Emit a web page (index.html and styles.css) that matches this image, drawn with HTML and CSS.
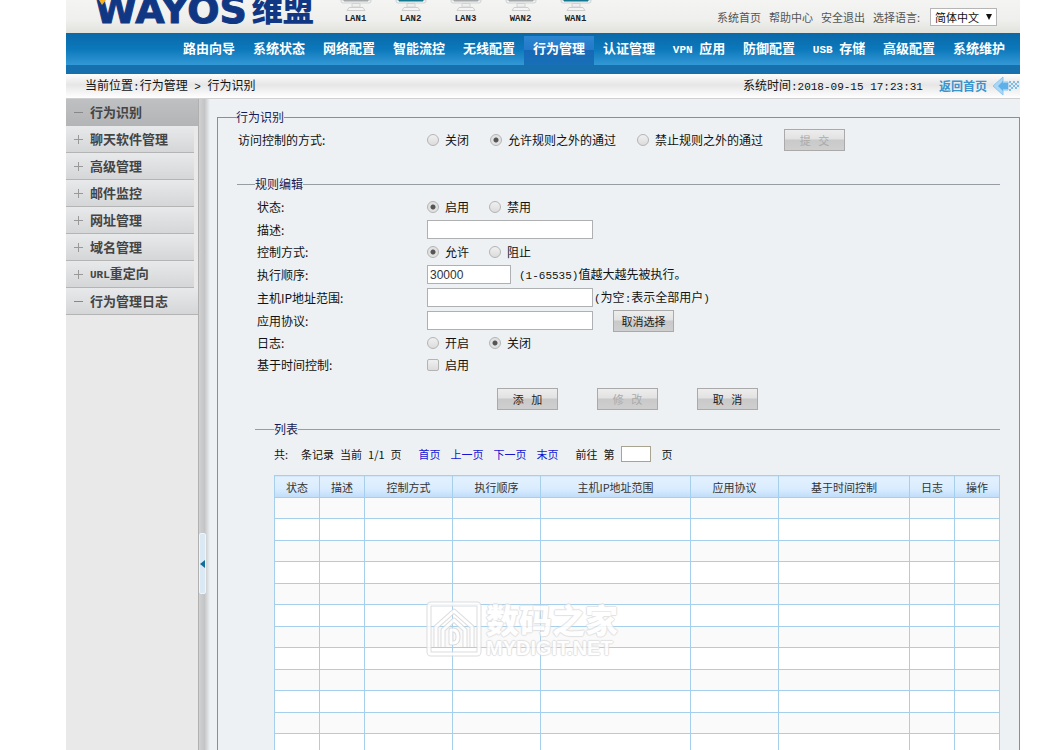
FILE: index.html
```html
<!DOCTYPE html>
<html lang="zh-CN">
<head>
<meta charset="utf-8">
<title>WAYOS 维盟 - 行为识别</title>
<link rel="stylesheet" href="styles.css">
</head>
<body>
<svg class="defs" aria-hidden="true">
  <symbol id="monitor" viewBox="0 0 34 12">
    <path d="M2 0V1Q2 3 4 3H30Q32 3 32 1V0Z" fill="#f1f3f3" stroke="#cfd4d5"/>
    <path class="screen" d="M5 0H29V1H5Z"/>
    <path d="M13 3.5H21V7H13Z" fill="#efefef" stroke="#d2d2d2"/>
    <path d="M10 7.5H24L26 10.5H8Z" fill="#f4f4f4" stroke="#cecece"/>
  </symbol>
</svg>
<div class="app">
  <header class="top">
    <div class="logo"><span class="logo-latin">WAYOS</span><span class="logo-cn">维盟</span>
      <svg class="logo-spark" viewBox="0 0 10 6" aria-hidden="true"><path d="M1 0H8L4 5Z" fill="#f6b21c"/></svg>
    </div>
    <div class="ports">
      <div class="port"><svg><use href="#monitor"/></svg>LAN1</div>
      <div class="port on"><svg><use href="#monitor"/></svg>LAN2</div>
      <div class="port"><svg><use href="#monitor"/></svg>LAN3</div>
      <div class="port"><svg><use href="#monitor"/></svg>WAN2</div>
      <div class="port on"><svg><use href="#monitor"/></svg>WAN1</div>
    </div>
    <div class="tools">
      <a href="#">系统首页</a><a href="#">帮助中心</a><a href="#">安全退出</a>
      <label for="lang">选择语言:</label>
      <span class="select"><select id="lang"><option>简体中文</option></select></span>
    </div>
  </header>
  <nav class="nav">
    <a href="#">路由向导</a><a href="#">系统状态</a><a href="#">网络配置</a><a href="#">智能流控</a><a href="#">无线配置</a><a href="#" class="active">行为管理</a><a href="#">认证管理</a><a href="#"><span class="mono">VPN </span>应用</a><a href="#">防御配置</a><a href="#"><span class="mono">USB </span>存储</a><a href="#">高级配置</a><a href="#">系统维护</a>
  </nav>
  <div class="crumbs">
    <div>当前位置<span class="mono">:</span>行为管理<span class="mono"> &gt; </span>行为识别</div>
    <div class="clock">系统时间<span class="mono">:2018-09-15 17:23:31</span></div>
    <a class="back" href="#">返回首页
      <svg viewBox="0 0 28 20" aria-hidden="true">
        <path d="M1 10L11 1V6H16V14H11V19Z" fill="#a9d7f5" stroke="#8cc6ee"/>
        <path d="M6 10L11 5V7H16V13H11V15Z" fill="#5eb0e8"/>
        <path d="M17 5H19V7H17ZM21 5H23V7H21ZM25 5H27V7H25ZM19 7H21V9H19ZM23 7H25V9H23ZM17 9H19V11H17ZM21 9H23V11H21ZM25 9H27V11H25ZM19 11H21V13H19ZM23 11H25V13H23ZM17 13H19V15H17Z" fill="#7dbde9"/>
      </svg>
    </a>
  </div>
  <div class="main">
    <aside class="side">
      <a href="#" class="wide current"><i class="sign minus"></i>行为识别</a>
      <a href="#"><i class="sign"></i>聊天软件管理</a>
      <a href="#"><i class="sign"></i>高级管理</a>
      <a href="#"><i class="sign"></i>邮件监控</a>
      <a href="#"><i class="sign"></i>网址管理</a>
      <a href="#"><i class="sign"></i>域名管理</a>
      <a href="#"><i class="sign"></i><span><span class="mono">URL</span>重定向</span></a>
      <a href="#" class="wide"><i class="sign minus"></i>行为管理日志</a>
    </aside>
    <div class="splitter"><button type="button" class="handle" aria-label="收起菜单"></button></div>
    <form class="content">
      <fieldset class="outer">
        <legend>行为识别</legend>
        <div class="access">
          <span>访问控制的方式:</span>
          <div class="choices">
            <label><input type="radio" name="mode">关闭</label>
            <label><input type="radio" name="mode" checked>允许规则之外的通过</label>
            <label><input type="radio" name="mode">禁止规则之外的通过</label>
            <button type="button" class="btn" disabled>提&nbsp;&nbsp;&nbsp;交</button>
          </div>
        </div>
        <fieldset class="section rules">
          <legend>规则编辑</legend>
          <div class="row"><span>状态:</span>
            <div class="choices"><label><input type="radio" name="state" checked>启用</label><label><input type="radio" name="state">禁用</label></div></div>
          <div class="row field"><label for="desc">描述:</label><div class="choices"><input class="text" id="desc" type="text"></div></div>
          <div class="row"><span>控制方式:</span>
            <div class="choices"><label><input type="radio" name="ctrl" checked>允许</label><label><input type="radio" name="ctrl">阻止</label></div></div>
          <div class="row field"><label for="order">执行顺序:</label><div class="choices hint"><input class="text short" id="order" type="text" value="30000"><span><span class="mono">(1-65535)</span>值越大越先被执行。</span></div></div>
          <div class="row field"><label for="ip">主机IP地址范围:</label><div class="choices tight"><input class="text" id="ip" type="text"><span><span class="mono">(</span>为空<span class="mono">:</span>表示全部用户<span class="mono">)</span></span></div></div>
          <div class="row field"><label for="proto">应用协议:</label><div class="choices"><input class="text" id="proto" type="text"><button type="button" class="btn">取消选择</button></div></div>
          <div class="row"><span>日志:</span>
            <div class="choices"><label><input type="radio" name="log">开启</label><label><input type="radio" name="log" checked>关闭</label></div></div>
          <div class="row"><span>基于时间控制:</span>
            <div class="choices"><label><input type="checkbox">启用</label></div></div>
          <div class="actions">
            <button type="button" class="btn">添&nbsp;&nbsp;&nbsp;加</button>
            <button type="button" class="btn" disabled>修&nbsp;&nbsp;&nbsp;改</button>
            <button type="button" class="btn">取&nbsp;&nbsp;&nbsp;消</button>
          </div>
          <fieldset class="section list">
            <legend>列表</legend>
            <div class="pager">
              <span class="total">共:</span><span>条记录</span><span>当前</span><span>1/1</span><span>页</span>
              <span class="links"><a href="#">首页</a><a href="#">上一页</a><a href="#">下一页</a><a href="#">末页</a></span>
              <label for="page">前往</label><span>第</span><input id="page" type="text"><span class="unit">页</span>
            </div>
            <div class="grid">
              <table>
                <colgroup><col class="c-s"><col class="c-s"><col class="c-m"><col class="c-m"><col><col class="c-m"><col class="c-l"><col class="c-s"><col class="c-s"></colgroup>
                <thead><tr><th>状态</th><th>描述</th><th>控制方式</th><th>执行顺序</th><th>主机IP地址范围</th><th>应用协议</th><th>基于时间控制</th><th>日志</th><th>操作</th></tr></thead>
                <tbody>
                  <tr><td></td><td></td><td></td><td></td><td></td><td></td><td></td><td></td><td></td></tr>
                  <tr><td></td><td></td><td></td><td></td><td></td><td></td><td></td><td></td><td></td></tr>
                  <tr><td></td><td></td><td></td><td></td><td></td><td></td><td></td><td></td><td></td></tr>
                  <tr><td></td><td></td><td></td><td></td><td></td><td></td><td></td><td></td><td></td></tr>
                  <tr><td></td><td></td><td></td><td></td><td></td><td></td><td></td><td></td><td></td></tr>
                  <tr><td></td><td></td><td></td><td></td><td></td><td></td><td></td><td></td><td></td></tr>
                  <tr><td></td><td></td><td></td><td></td><td></td><td></td><td></td><td></td><td></td></tr>
                  <tr><td></td><td></td><td></td><td></td><td></td><td></td><td></td><td></td><td></td></tr>
                  <tr><td></td><td></td><td></td><td></td><td></td><td></td><td></td><td></td><td></td></tr>
                  <tr><td></td><td></td><td></td><td></td><td></td><td></td><td></td><td></td><td></td></tr>
                  <tr><td></td><td></td><td></td><td></td><td></td><td></td><td></td><td></td><td></td></tr>
                  <tr><td></td><td></td><td></td><td></td><td></td><td></td><td></td><td></td><td></td></tr>
                </tbody>
              </table>
              <div class="stamp">
                <svg viewBox="0 0 56 56" fill="none" aria-hidden="true">
                  <g stroke="#d8d8d8" stroke-width="5" stroke-linejoin="round">
                    <rect x="3" y="3" width="50" height="50" rx="2"/><path d="M10 46V26L28 10L46 26V46M17 46V29L28 19L39 29V46M25 29V42H27Q32 42 32 36Q32 29 27 29Z"/>
                  </g>
                  <g stroke="#fff" stroke-width="3" stroke-linejoin="round">
                    <rect x="3" y="3" width="50" height="50" rx="2"/><path d="M10 46V26L28 10L46 26V46M17 46V29L28 19L39 29V46M25 29V42H27Q32 42 32 36Q32 29 27 29Z"/>
                  </g>
                </svg>
                <div><div class="stamp-cn">数码之家</div><div class="stamp-en">MYDIGIT.NET</div></div>
              </div>
            </div>
          </fieldset>
        </fieldset>
      </fieldset>
    </form>
  </div>
</div>
</body>
</html>
```

FILE: styles.css
```css
* { box-sizing: border-box; }

body {
  margin: 0;
  background: #fff;
  color: #111;
  font: 12px/16px "Noto Sans CJK SC", sans-serif;
  height: 100vh;
  overflow: hidden;
}

a { color: inherit; text-decoration: none; }
input, button, select { font: inherit; margin: 0; }
.defs { display: none; }

.mono {
  font-family: "Liberation Mono", monospace;
  font-size: 11px;
  white-space: pre;
}

.app {
  margin: 0 27px 0 66px;
  height: 100vh;
  display: flex;
  flex-direction: column;
}

/* Header */
.top {
  display: flex;
  height: 33px;
  flex: none;
  background: linear-gradient(#f4f4f3, #efefed 60%, #e2e2dc);
}

.logo {
  position: relative;
  display: flex;
  align-items: flex-end;
  gap: 5px;
  width: 262px;
  padding: 0 0 13px 29px;
  color: #103783;
}

.logo-latin {
  font: bold 38px/24px "DejaVu Sans", sans-serif;
  height: 22px;
  -webkit-text-stroke: 1px #103783;
}
.logo-cn { font-weight: 900; font-size: 31px; line-height: 24px; height: 24px; }
.logo-spark { position: absolute; left: 32px; top: 0; width: 10px; height: 6px; }

.ports { display: flex; }
.port {
  width: 55px;
  display: flex;
  flex-direction: column;
  align-items: center;
  font: bold 9px/15px "Liberation Mono", monospace;
  color: #222;
  --screen: #a5a7a8;
}
.port.on { --screen: #16788f; }
.port svg { width: 34px; height: 12px; }
.screen { fill: var(--screen); stroke: var(--screen); }

.tools {
  margin-left: auto;
  padding-right: 23px;
  display: flex;
  align-items: center;
  gap: 8px;
  font-size: 11px;
  line-height: 14px;
  color: #555;
}

.select { position: relative; margin-left: 2px; }
.select::after {
  content: "";
  position: absolute;
  right: 5px;
  top: 6px;
  border: 3px solid transparent;
  border-top: 6px solid #111;
  border-bottom: 0;
}
select {
  appearance: none;
  display: block;
  width: 67px;
  height: 18px;
  padding: 0 0 0 4px;
  border: 1px solid #b5b5b5;
  border-radius: 0;
  background: #fff;
  color: #111;
  line-height: 16px;
}

.nav {
  display: flex;
  flex: none;
  justify-content: flex-end;
  height: 41px;
  padding-right: 6px;
  border-bottom: 9px solid #1670ae;
  background: linear-gradient(#0a69a8, #0b78bb 50%, #3498d6);
  background-origin: padding-box;
  color: #fff;
  font-size: 13px;
  font-weight: bold;
  line-height: 24px;
}
.nav a { width: 70px; text-align: center; padding-top: 3px; white-space: nowrap; }
.nav .active {
  margin-top: 3px;
  padding: 0;
  background: linear-gradient(#2b86d0, #2478c8 50%, #1668b6 50%, #1870b6);
}

.crumbs {
  display: flex;
  flex: none;
  align-items: center;
  height: 25px;
  padding-left: 19px;
  border-bottom: 1px solid #cfcfd2;
  background: linear-gradient(#fdfdfd, #e6e6e7 45%, #fff);
}
.clock { margin-left: auto; }
.back {
  display: flex;
  align-items: center;
  gap: 5px;
  margin-left: 16px;
  color: #3a94cd;
  font-weight: bold;
}
.back svg { width: 28px; height: 20px; }

/* Body */
.main { display: flex; flex: 1; min-height: 0; background: #edf1f4; }

.side { width: 132px; flex: none; background: #e9e9e9; }
.side a {
  display: flex;
  align-items: center;
  height: 27px;
  width: 128px;
  padding-left: 8px;
  gap: 7px;
  border-bottom: 1px solid #b4b4b4;
  background: linear-gradient(#e8e9ea, #d4d6d8);
  color: #444;
  font-size: 13px;
  font-weight: bold;
}
.side .wide { width: 132px; }
.side .current { background: linear-gradient(#bfc0c2, #b3b5b7); }
.sign {
  width: 9px;
  height: 9px;
  background: linear-gradient(#999, #999) center / 9px 1px no-repeat, linear-gradient(#999, #999) center / 1px 9px no-repeat;
}
.sign.minus { background: linear-gradient(#888, #888) center / 9px 1px no-repeat; }

.splitter {
  display: flex;
  align-items: center;
  width: 12px;
  flex: none;
  padding-top: 278px;
  border-left: 1px solid #b0b0b0;
  background: linear-gradient(90deg, #d2d2d3, #c3c4c6 50%, #edf1f4);
}
.handle {
  width: 7px;
  height: 61px;
  padding: 0;
  border: 1px solid #eef6fc;
  border-radius: 2px;
  background: #dbe9f4;
}
.handle::before {
  content: "";
  display: block;
  width: 0;
  border: 4px solid transparent;
  border-left: 0;
  border-right: 5px solid #126f9a;
}

.content { flex: 1; min-width: 0; padding: 10px 0 0 7px; overflow: hidden; }

fieldset { margin: 0; min-width: 0; }
legend { padding: 0; color: #171b55; }
.outer { border: 1px solid #7593ba; border-bottom: 0; padding: 4px 19px 0; }
.outer > legend { margin-left: -1px; }

.access { display: grid; grid-template-columns: 189px 1fr; align-items: center; padding-left: 1px; }
.choices { display: flex; align-items: center; gap: 20px; white-space: nowrap; }
.access .choices { gap: 21px; }
.choices label { display: flex; align-items: center; gap: 6px; }
.choices.hint { gap: 8px; }
.choices.tight { gap: 1px; }

.section { border: 0; border-top: 1px solid #989ca3; }
.rules { margin-top: 25px; padding: 4px 0 0 18px; }

.row {
  display: grid;
  grid-template-columns: 170px 1fr;
  align-items: center;
  height: 22px;
  padding-left: 2px;
}
.row.field { height: 23px; }

input[type="radio"], input[type="checkbox"] {
  appearance: none;
  width: 12px;
  height: 12px;
  border: 1px solid #b4b4b4;
  background: linear-gradient(#f0f0f0, #dcdcdc);
}
input[type="radio"] { border-radius: 50%; }
input[type="checkbox"] { border-radius: 2px; }
input[type="radio"]:checked {
  background: radial-gradient(circle, #555 0 2px, #e2e2e2 3px);
}

.text {
  width: 166px;
  height: 19px;
  padding: 0 2px;
  border: 1px solid #aeb0b2;
  background: #fff;
  color: #333;
  font-family: "Liberation Sans", sans-serif;
}
.text.short { width: 84px; }

.btn {
  width: 61px;
  height: 22px;
  padding: 0;
  border: 1px solid #aaa;
  background: linear-gradient(#ededed, #e2e2e2 45%, #c9c9c9 50%, #cfcfcf);
  color: #222;
  font-size: 11px;
  line-height: 20px;
}
.btn:disabled { color: #aaa; }

.actions { display: flex; gap: 39px; padding: 12px 0 11px 242px; }

.list { padding: 9px 0 0 19px; }

.pager { display: flex; align-items: center; gap: 6px; font-size: 11px; white-space: nowrap; }
.total { margin-right: 7px; }
.links { display: flex; gap: 10px; margin: 0 11px; color: #1414d2; }
.pager input { width: 30px; height: 16px; padding: 0 2px; border: 1px solid #a9a490; background: #fff; }
.unit { margin-left: 5px; }

.grid { position: relative; margin-top: 13px; }
table { width: 100%; table-layout: fixed; border-collapse: collapse; }
.c-s { width: 45px; }
.c-m { width: 88px; }
.c-l { width: 131px; }
th, td { border: 1px solid #a5cfea; padding: 0; }
th {
  height: 22px;
  background: linear-gradient(#e4f1fe, #d9ecff 60%, #bfdcf9);
  color: #333;
  font-size: 11px;
  font-weight: normal;
  line-height: 18px;
}
tbody tr { height: 22px; background: #fff; }
tbody tr:nth-child(odd) { height: 21px; background: #fafafa; }

.stamp {
  position: absolute;
  left: 152px;
  top: 125px;
  display: flex;
  align-items: center;
  gap: 4px;
  color: #fff;
  opacity: .85;
  text-shadow: 1px 0 1px #ddd, -1px 0 1px #ddd, 0 1px 1px #ddd, 0 -1px 1px #ddd;
  pointer-events: none;
}
.stamp svg { width: 56px; height: 56px; }
.stamp-cn { font-size: 33px; font-weight: 900; line-height: 38px; }
.stamp-en { font: bold 20px/20px "Liberation Sans", sans-serif; }
```
